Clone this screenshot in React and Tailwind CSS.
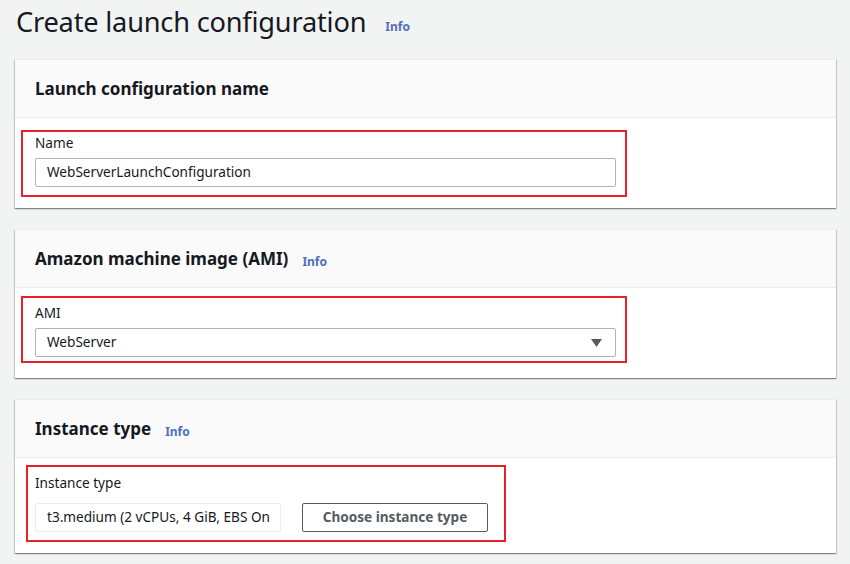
import React from 'react';

const font = { fontFamily: '"Noto Sans", "Open Sans", Arial, sans-serif' };

function Info() {
  return <span className="text-[12px] font-bold text-[#4f6fbd] leading-none">Info</span>;
}

function Card({ title, info, children }) {
  return (
    <section className="w-[821px] bg-white border-t border-[#eaeded] shadow-[0_1px_1px_0_rgba(0,28,36,0.3),1px_1px_1px_0_rgba(0,28,36,0.15),-1px_1px_1px_0_rgba(0,28,36,0.15)]">
      <header className="h-[58px] bg-[#fafafa] border-b border-[#eaeded] flex items-center pl-5">
        <h2 className="text-[17px] font-bold text-[#16191f] leading-none">{title}</h2>
        {info && <span className="ml-[14px] mt-[3px]"><Info /></span>}
      </header>
      {children}
    </section>
  );
}

function Field({ label }) {
  return <div className="text-[13.6px] leading-[20px] text-[#16191f]">{label}</div>;
}

export default function App() {
  return (
    <div className="min-h-[564px] w-[850px] bg-[#f2f3f3] pl-[15px] pt-[2px] overflow-hidden" style={font}>
      <div className="flex items-center h-[40px] pl-[1px]">
        <h1 className="text-[27.2px] font-normal text-[#16191f] leading-none tracking-[-0.2px]">Create launch configuration</h1>
        <span className="ml-[19px] mt-[6px]"><Info /></span>
      </div>

      <div className="mt-[17px] flex flex-col gap-[21px]">
        <Card title="Launch configuration name">
          <div className="pt-[12px] pb-[11px] pl-[6px]">
            <div className="w-[606px] border-2 border-[#e8202a] pl-[12px] pr-[9px] pt-[1px] pb-[8px]">
              <Field label="Name" />
              <div className="mt-[5px] h-[29px] border border-[#aab7b8] rounded-[2px] flex items-center pl-[11px] text-[13.6px] text-[#16191f]">
                WebServerLaunchConfiguration
              </div>
            </div>
          </div>
        </Card>

        <Card title="Amazon machine image (AMI)" info>
          <div className="pt-[8px] pb-[15px] pl-[6px]">
            <div className="w-[606px] border-2 border-[#e8202a] pl-[12px] pr-[9px] pt-[5px] pb-[4px]">
              <Field label="AMI" />
              <div className="mt-[5px] h-[29px] border border-[#aab7b8] rounded-[2px] flex items-center justify-between pl-[11px] pr-[13px] text-[13.6px] text-[#16191f]">
                <span>WebServer</span>
                <svg width="11" height="8" viewBox="0 0 11 8">
                  <path d="M0 0 H11 L5.5 8 Z" fill="#545b64" />
                </svg>
              </div>
            </div>
          </div>
        </Card>

        <Card title="Instance type" info>
          <div className="pt-[7px] pb-[11px] pl-[11px]">
            <div className="w-[480px] border-2 border-[#e8202a] pl-[7px] pt-[6px] pb-[8px]">
              <Field label="Instance type" />
              <div className="mt-[10px] flex items-center gap-[21px]">
                <div className="w-[246px] h-[29px] border border-[#eaeded] rounded-[2px] flex items-center pl-[11px] text-[13.6px] text-[#16191f] overflow-hidden whitespace-nowrap">
                  t3.medium (2 vCPUs, 4 GiB, EBS On
                </div>
                <button className="w-[186px] h-[29px] border border-[#545b64] rounded-[2px] bg-white text-[13.6px] font-bold text-[#545b64] flex items-center justify-center">
                  Choose instance type
                </button>
              </div>
            </div>
          </div>
        </Card>
      </div>
    </div>
  );
}
